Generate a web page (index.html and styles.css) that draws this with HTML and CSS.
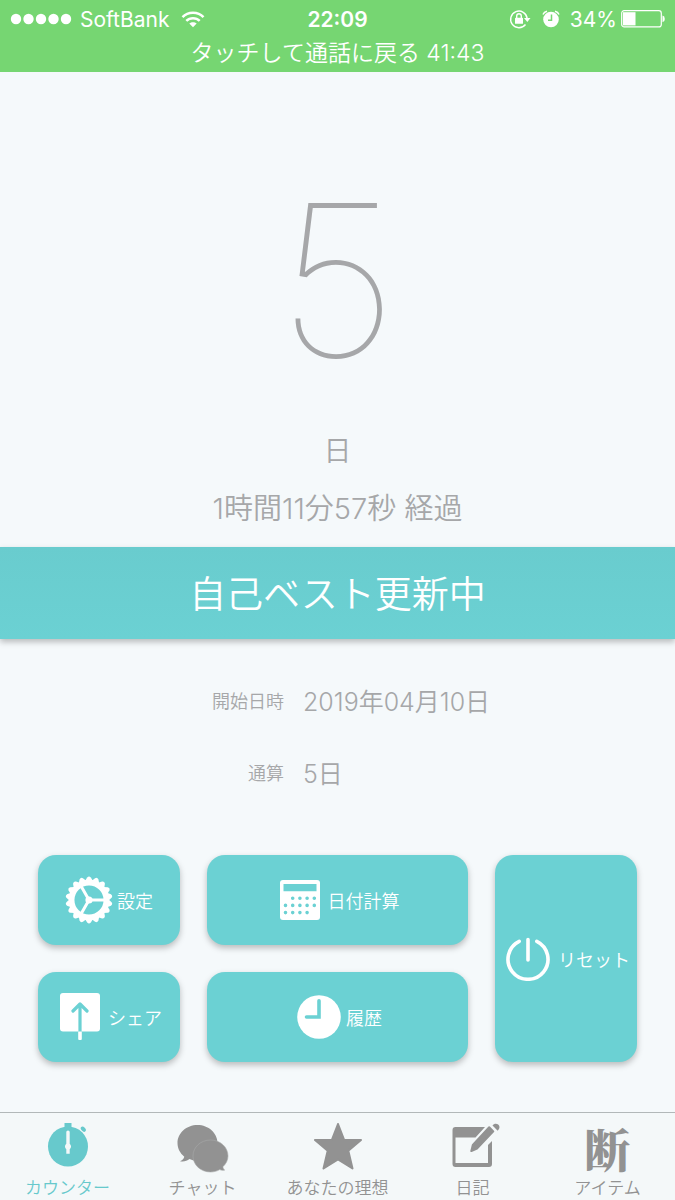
FILE: index.html
```html
<!DOCTYPE html>
<html lang="ja">
<head>
<meta charset="utf-8">
<meta name="viewport" content="width=device-width, initial-scale=1">
<title>カウンター</title>
<link rel="stylesheet" href="styles.css">
</head>
<body>
<header class="status">
  <div class="status-row">
    <div class="status-left">
      <svg class="signal" width="62" height="12" viewBox="0 0 62 12" fill="#fff" aria-hidden="true"><circle cx="6" cy="6" r="5.2"/><circle cx="18.500" cy="6" r="5.2"/><circle cx="31" cy="6" r="5.2"/><circle cx="43.500" cy="6" r="5.2"/><circle cx="56" cy="6" r="5.2"/></svg>
      <span>SoftBank</span>
      <svg class="wifi" width="24" height="17" viewBox="0 0 24 17" aria-hidden="true"><g fill="none" stroke="#fff" stroke-width="2.500"><path d="M1.500 6.200C7 .4 17 .4 22.500 6.200"/><path d="M5.300 9.900C9 6.200 15 6.200 18.700 9.900"/></g><path fill="#fff" d="M8.300 12.600C10.400 10.800 13.600 10.800 15.700 12.600L12 16.300Z"/></svg>
    </div>
    <time class="clock">22:09</time>
    <div class="status-right">
      <svg width="22" height="20" viewBox="0 0 22 20" aria-hidden="true"><path d="M16.500 15.500A8.300 8.300 0 1 1 18.200 9.500" fill="none" stroke="#fff" stroke-width="1.400"/><path d="M15 9h6.500l-3.200 4Z" fill="#fff"/><rect x="6" y="8.800" width="8" height="6" rx=".6" fill="#fff"/><path d="M7.700 9V7a2.300 2.300 0 0 1 4.600 0v2" fill="none" stroke="#fff" stroke-width="1.400"/></svg>
      <svg class="alarm" width="18" height="18" viewBox="0 0 18 18" aria-hidden="true"><circle cx="9" cy="9.500" r="7.800" fill="#fff"/><path d="M1 4.500Q2 1.800 5 1.200M17 4.500Q16 1.800 13 1.200" fill="none" stroke="#fff" stroke-width="1.500"/><path d="M9.500 4.500v5.700H6" fill="none" stroke="#76d672" stroke-width="1.500"/></svg>
      <span>34%</span>
      <svg class="battery" width="44" height="18" viewBox="0 0 44 18" aria-hidden="true"><rect x=".7" y=".7" width="39.600" height="16.200" rx="2.500" fill="none" stroke="#fff" stroke-width="1.200"/><rect x="2" y="2.200" width="12.500" height="13.200" fill="#fff"/><path d="M41.500 5.500q2.300 .5 2.300 3.400t-2.300 3.400Z" fill="#fff"/></svg>
    </div>
  </div>
  <a class="call" href="#call">タッチして通話に戻る 41:43</a>
</header>

<main class="main">
  <section class="counter">
    <div class="days">5</div>
    <div class="unit">日</div>
    <div class="elapsed">1時間11分57秒 経過</div>
  </section>
  <h1 class="banner">自己ベスト更新中</h1>
  <dl class="facts">
    <dt>開始日時</dt><dd>2019年04月10日</dd>
    <dt>通算</dt><dd>5日</dd>
  </dl>
  <div class="actions">
    <button class="btn settings" type="button">
      <svg width="48" height="48" viewBox="-24 -24 48 48" aria-hidden="true">
        <circle r="17.300" fill="none" stroke="#fff" stroke-width="5.500"/>
        <path d="M0 0H16M0 0L-8 -13.900M0 0L-8 13.900" stroke="#fff" stroke-width="3"/><circle r="3.600" fill="#fff"/>
        <g fill="#fff"><g id="teeth"><path id="tooth" d="M-4 -19L-1.800 -22.600Q0 -24.400 1.800 -22.600L4 -19Z"/><use href="#tooth" transform="rotate(20)"/><use href="#tooth" transform="rotate(40)"/><use href="#tooth" transform="rotate(60)"/><use href="#tooth" transform="rotate(80)"/><use href="#tooth" transform="rotate(100)"/></g><use href="#teeth" transform="rotate(120)"/><use href="#teeth" transform="rotate(240)"/></g>
      </svg>
      <span>設定</span>
    </button>
    <button class="btn calc" type="button">
      <svg width="40" height="40" viewBox="0 0 40 40" aria-hidden="true"><rect width="40" height="40" rx="3" fill="#fff"/><path d="M3.500 4h33v7.300h-33Z" fill="#6bd1d3"/><path d="M12.700 18.200h22M5.500 25.400h30M5.500 32.600h22" stroke="#6bd1d3" stroke-width="3.600" stroke-linecap="round" stroke-dasharray="0 7.200"/></svg>
      <span>日付計算</span>
    </button>
    <button class="btn reset" type="button">
      <svg width="44" height="44" viewBox="0 0 44 44" fill="none" stroke="#fff" stroke-width="3.600" stroke-linecap="round" aria-hidden="true"><path d="M22 2.500v20.500M13.200 4.300A20 20 0 1 0 30.800 4.300"/></svg>
      <span>リセット</span>
    </button>
    <button class="btn share" type="button">
      <svg width="40" height="48" viewBox="0 0 40 48" aria-hidden="true"><rect width="40" height="38.500" rx="3" fill="#fff"/><path d="M20 38.500V11M13 18l7-7 7 7" fill="none" stroke="#6bd1d3" stroke-width="3.200" stroke-linecap="round" stroke-linejoin="round"/><path d="M18.200 38.500h3.600v7.500q0 1-1 1h-1.600q-1 0-1-1Z" fill="#fff"/></svg>
      <span>シェア</span>
    </button>
    <button class="btn history" type="button">
      <svg width="44" height="44" viewBox="0 0 44 44" aria-hidden="true"><circle cx="22" cy="22" r="21.800" fill="#fff"/><path d="M22 5.800V22H9.500" fill="none" stroke="#6bd1d3" stroke-width="3.600" stroke-linecap="round"/></svg>
      <span>履歴</span>
    </button>
  </div>
</main>

<nav class="tabs">
  <a class="tab active" href="#counter">
    <svg width="44" height="48" viewBox="0 0 44 48" aria-hidden="true"><circle cx="22" cy="23.500" r="20" fill="currentColor"/><path d="M18.500 0h7v6h-7Z" fill="currentColor"/><ellipse cx="37.300" cy="6.200" rx="3" ry="2" transform="rotate(45 37.300 6.200)" fill="currentColor"/><path d="M20.300 9q0-1.500 1.700-1.500t1.700 1.500v11.700a3.500 3.500 0 0 1 0 5.500v4.500h-3.400v-4.500a3.500 3.500 0 0 1 0-5.500Z" fill="#f4f8f9"/></svg>
    <span>カウンター</span>
  </a>
  <a class="tab" href="#chat">
    <svg width="52" height="50" viewBox="0 0 52 50" fill="currentColor" aria-hidden="true"><path d="M20.500 2C9.500 2 .5 10 .5 20c0 5.700 2.700 10.200 6.800 13.700-.5 2-2.200 3.500-4.300 4.500 3.700 .8 7-.2 9.500-2.200C15 37 18 38 20.500 38c11 0 20-8 20-18S31.500 2 20.500 2Z"/><path d="M33.500 17C23.800 17 16 24 16 33s7.800 16 17.500 16c3.500 0 6.500-.8 9.200-2.400 1.600 .8 3.300 1 5 .5-1.100-.8-1.700-2-1.800-3.300 3-2.800 5.100-6.600 5.100-10.800 0-9-7.800-16-17.500-16Z" stroke="#a7aaaa" stroke-width=".6"/></svg>
    <span>チャット</span>
  </a>
  <a class="tab" href="#ideal">
    <svg width="50" height="48" viewBox="0 0 50 48" aria-hidden="true"><path d="M25 1L31.200 17H48L35.300 27.700 39.500 45.500 25 36.300 10.500 45.500 14.700 27.700 2 17H18.800Z" fill="currentColor" stroke="currentColor" stroke-width="2" stroke-linejoin="round"/></svg>
    <span>あなたの理想</span>
  </a>
  <a class="tab" href="#diary">
    <svg width="44" height="48" viewBox="0 0 44 48" fill="currentColor" overflow="visible" aria-hidden="true"><path d="M3 4H34L24.500 14.500H4.500V40H37V22L41 18V41q0 3-3 3H4.500q-3 0-3-3V7q0-3 3-3Z"/><path d="M38.200 4.300L42.300 8.400 26 25.500 20.300 28 21.800 22Z" stroke="currentColor" stroke-width="2" stroke-linejoin="round"/><path d="M41.500 2.500C43.500-.3 48 .5 48.500 4q.2 1.800-1.800 3.800Z"/></svg>
    <span>日記</span>
  </a>
  <a class="tab" href="#items">
    <span class="kanji" aria-hidden="true">断</span>
    <span>アイテム</span>
  </a>
</nav>
</body>
</html>
```
FILE: styles.css
```css
* { box-sizing: border-box; }

body {
  margin: 0;
  min-height: 100vh;
  display: flex;
  flex-direction: column;
  background: #f5f9fb;
  color: #a6a7a9;
  font-family: Inter, "Noto Sans CJK JP", sans-serif;
  font-weight: 350;
}

a { color: inherit; text-decoration: none; }
svg { display: block; flex: none; }

.status {
  background: #76d672;
  color: #fff;
  height: 72px;
  padding: 4px 10px 0;
}

.status-row {
  display: grid;
  grid-template-columns: 1fr auto 1fr;
  align-items: center;
  height: 30px;
  font-size: 21px;
  font-weight: 400;
}

.status-left, .status-right { display: flex; align-items: center; }
.signal { margin-right: 8px; }
.wifi { margin-left: 12px; }
.status-right { justify-content: flex-end; }
.alarm { margin: 0 10px 0 11px; }
.battery { margin-left: 4px; }
.clock { font-weight: 600; }

.call {
  display: block;
  text-align: center;
  font-size: 23px;
  line-height: 38px;
}

.main { flex: 1; display: flex; flex-direction: column; }

.counter { text-align: center; padding-top: 78px; }
.days { font-size: 212px; font-weight: 100; line-height: 260px; }
.unit { font-size: 28px; line-height: 58px; padding-top: 12px; }
.elapsed { font-size: 29px; line-height: 58px; }

.banner {
  margin: 9px 0 0;
  padding-top: 4px;
  background: linear-gradient(#69ccce, #6bd1d3);
  color: #fff;
  font-size: 37px;
  font-weight: 350;
  line-height: 88px;
  text-align: center;
  box-shadow: 0 3px 6px #00000040;
}

.facts {
  display: grid;
  grid-template-columns: 284fr 372fr;
  column-gap: 19px;
  align-items: center;
  margin: 27px 0 0;
}

.facts dt { font-size: 18px; line-height: 72px; text-align: right; }
.facts dd { margin: 0; font-size: 25px; line-height: 72px; }

.actions {
  display: grid;
  grid-template-columns: 142fr 261fr 142fr;
  grid-template-rows: 90px 90px;
  gap: 27px;
  padding: 45px 38px 50px;
}

.btn {
  display: flex;
  align-items: center;
  justify-content: center;
  gap: 8px;
  padding: 0 0 0 4px;
  border: 0;
  border-radius: 18px;
  background: #6bd1d3;
  color: #fff;
  font: inherit;
  font-size: 18px;
  box-shadow: 0 3px 6px #00000040;
}

.settings { gap: 4px; padding: 0; }
.history { gap: 5px; }
.reset { grid-column: 3; grid-row: 1 / 3; }

.tabs {
  display: grid;
  grid-template-columns: repeat(5, 1fr);
  border-top: 1px solid #b2b8b9;
  background: #f4f8f9;
  color: #929292;
}

.tab {
  display: flex;
  flex-direction: column;
  align-items: center;
  justify-content: space-between;
  padding-top: 10px;
  height: 88px;
  font-size: 17px;
  line-height: 26px;
}

.active { color: #67c9cc; }

.kanji {
  font-family: "Noto Serif CJK JP", "Noto Sans CJK JP", serif;
  font-size: 46px;
  font-weight: 900;
  line-height: 48px;
}
```
